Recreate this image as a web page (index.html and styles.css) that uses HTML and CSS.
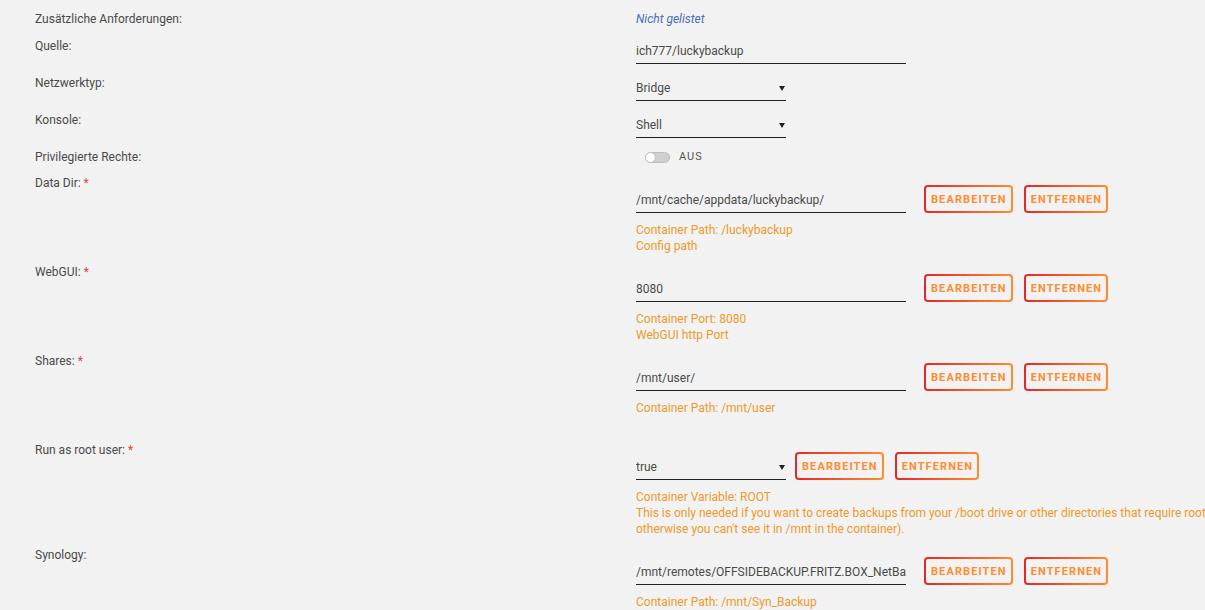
FILE: index.html
```html
<!DOCTYPE html>
<html lang="de">
<head>
  <meta charset="UTF-8">
  <meta name="viewport" content="width=device-width, initial-scale=1.0">
  <title>Container bearbeiten</title>
  <link rel="stylesheet" href="styles.css">
</head>
<body>
  <div class="template-form">
    <div class="row row-text">
      <div class="label">Zusätzliche Anforderungen:</div>
      <div class="value"><span class="link">Nicht gelistet</span></div>
    </div>

    <div class="row row-field">
      <div class="label">Quelle:</div>
      <div class="value"><input class="text-input" type="text" value="ich777/luckybackup"></div>
    </div>

    <div class="row row-field">
      <div class="label">Netzwerktyp:</div>
      <div class="value">
        <div class="select"><select><option>Bridge</option></select></div>
      </div>
    </div>

    <div class="row row-field">
      <div class="label">Konsole:</div>
      <div class="value">
        <div class="select"><select><option>Shell</option></select></div>
      </div>
    </div>

    <div class="row row-switch">
      <div class="label">Privilegierte Rechte:</div>
      <div class="value">
        <span class="switch"><span class="knob"></span></span>
        <span class="switch-text">AUS</span>
      </div>
    </div>

    <div class="row row-config">
      <div class="label">Data Dir: <span class="req">*</span></div>
      <div class="value">
        <div class="field-line">
          <input class="text-input" type="text" value="/mnt/cache/appdata/luckybackup/">
          <button class="btn">Bearbeiten</button>
          <button class="btn">Entfernen</button>
        </div>
        <div class="desc">Container Path: /luckybackup<br>Config path</div>
      </div>
    </div>

    <div class="row row-config">
      <div class="label">WebGUI: <span class="req">*</span></div>
      <div class="value">
        <div class="field-line">
          <input class="text-input" type="text" value="8080">
          <button class="btn">Bearbeiten</button>
          <button class="btn">Entfernen</button>
        </div>
        <div class="desc">Container Port: 8080<br>WebGUI http Port</div>
      </div>
    </div>

    <div class="row row-config">
      <div class="label">Shares: <span class="req">*</span></div>
      <div class="value">
        <div class="field-line">
          <input class="text-input" type="text" value="/mnt/user/">
          <button class="btn">Bearbeiten</button>
          <button class="btn">Entfernen</button>
        </div>
        <div class="desc">Container Path: /mnt/user<br>&nbsp;</div>
      </div>
    </div>

    <div class="row row-config">
      <div class="label">Run as root user: <span class="req">*</span></div>
      <div class="value">
        <div class="field-line">
          <div class="select select-tight"><select><option>true</option></select></div>
          <button class="btn">Bearbeiten</button>
          <button class="btn">Entfernen</button>
        </div>
        <div class="desc">Container Variable: ROOT<br>This is only needed if you want to create backups from your /boot drive or other directories that require root<br>otherwise you can't see it in /mnt in the container).</div>
      </div>
    </div>

    <div class="row row-config">
      <div class="label">Synology:</div>
      <div class="value">
        <div class="field-line">
          <input class="text-input" type="text" value="/mnt/remotes/OFFSIDEBACKUP.FRITZ.BOX_NetBackup/Synology">
          <button class="btn">Bearbeiten</button>
          <button class="btn">Entfernen</button>
        </div>
        <div class="desc">Container Path: /mnt/Syn_Backup</div>
      </div>
    </div>
  </div>
</body>
</html>
```

FILE: styles.css
```css
html, body {
  overflow: hidden;
}
body {
  margin: 0;
  background: #f2f2f2;
  color: #4a4a4a;
  font-family: Roboto, "Liberation Sans", sans-serif;
  font-size: 12px;
}
.template-form {
  display: flex;
  flex-direction: column;
  gap: 11px;
  padding: 11px 0 0 35px;
}
.row {
  display: grid;
  grid-template-columns: 601px 1fr;
  align-items: start;
}
.label {
  line-height: 16px;
  white-space: nowrap;
}
.req {
  color: #ee3b3b;
}
.value {
  line-height: 16px;
}
.link {
  color: #486dba;
  font-style: italic;
}

/* inputs */
.text-input {
  box-sizing: border-box;
  width: 270px;
  height: 26px;
  margin: 0 7px 0 0;
  padding: 0;
  border: none;
  border-bottom: 1px solid #222;
  background: transparent;
  color: #4a4a4a;
  font: inherit;
  outline: none;
}
.row-field .text-input {
  margin-right: 0;
}
.select {
  position: relative;
  width: 150px;
}
.select-tight {
  margin-right: -2px;
}
.select select {
  box-sizing: border-box;
  width: 100%;
  height: 26px;
  margin: 0;
  padding: 0;
  border: none;
  border-bottom: 1px solid #222;
  border-radius: 0;
  background: transparent;
  color: #4a4a4a;
  font: inherit;
  -webkit-appearance: none;
  appearance: none;
  outline: none;
}
.select::after {
  content: "";
  position: absolute;
  right: 1px;
  top: 11px;
  border-left: 3px solid transparent;
  border-right: 3px solid transparent;
  border-top: 5px solid #222;
}

/* switch */
.row-switch {
  margin-top: 1px;
}
.row-switch .label {
  line-height: 14px;
}
.row-switch .value {
  display: flex;
  align-items: center;
  height: 14px;
  padding-left: 9px;
}
.switch {
  position: relative;
  box-sizing: border-box;
  width: 25px;
  height: 11px;
  border: 1px solid #bdbdbd;
  border-radius: 6px;
  background: #cfcfcf;
}
.knob {
  position: absolute;
  left: -1px;
  top: -1px;
  box-sizing: border-box;
  width: 11px;
  height: 11px;
  border: 1px solid #bdbdbd;
  border-radius: 50%;
  background: #fff;
}
.switch-text {
  margin-left: 9px;
  font-size: 11px;
  letter-spacing: 1px;
  color: #555;
}

/* config rows */
.row-config + .row-config {
  margin-top: -1px;
}
.field-line {
  display: flex;
  align-items: flex-end;
  margin-top: 10px;
  height: 28px;
}
.btn {
  box-sizing: border-box;
  height: 28px;
  margin: 0 0 0 11px;
  padding: 0 4px 0 5px;
  border: 2px solid transparent;
  border-radius: 4px;
  background: linear-gradient(#f2f2f2, #f2f2f2) padding-box,
              linear-gradient(90deg, #e22828, #ff8c2f) border-box;
  color: #ff8c2f;
  font-family: Roboto, "Liberation Sans", sans-serif;
  font-size: 11px;
  font-weight: bold;
  letter-spacing: 1.1px;
  text-transform: uppercase;
  cursor: pointer;
}
.desc {
  margin-top: 9px;
  color: #ec9a29;
  white-space: nowrap;
}
```
